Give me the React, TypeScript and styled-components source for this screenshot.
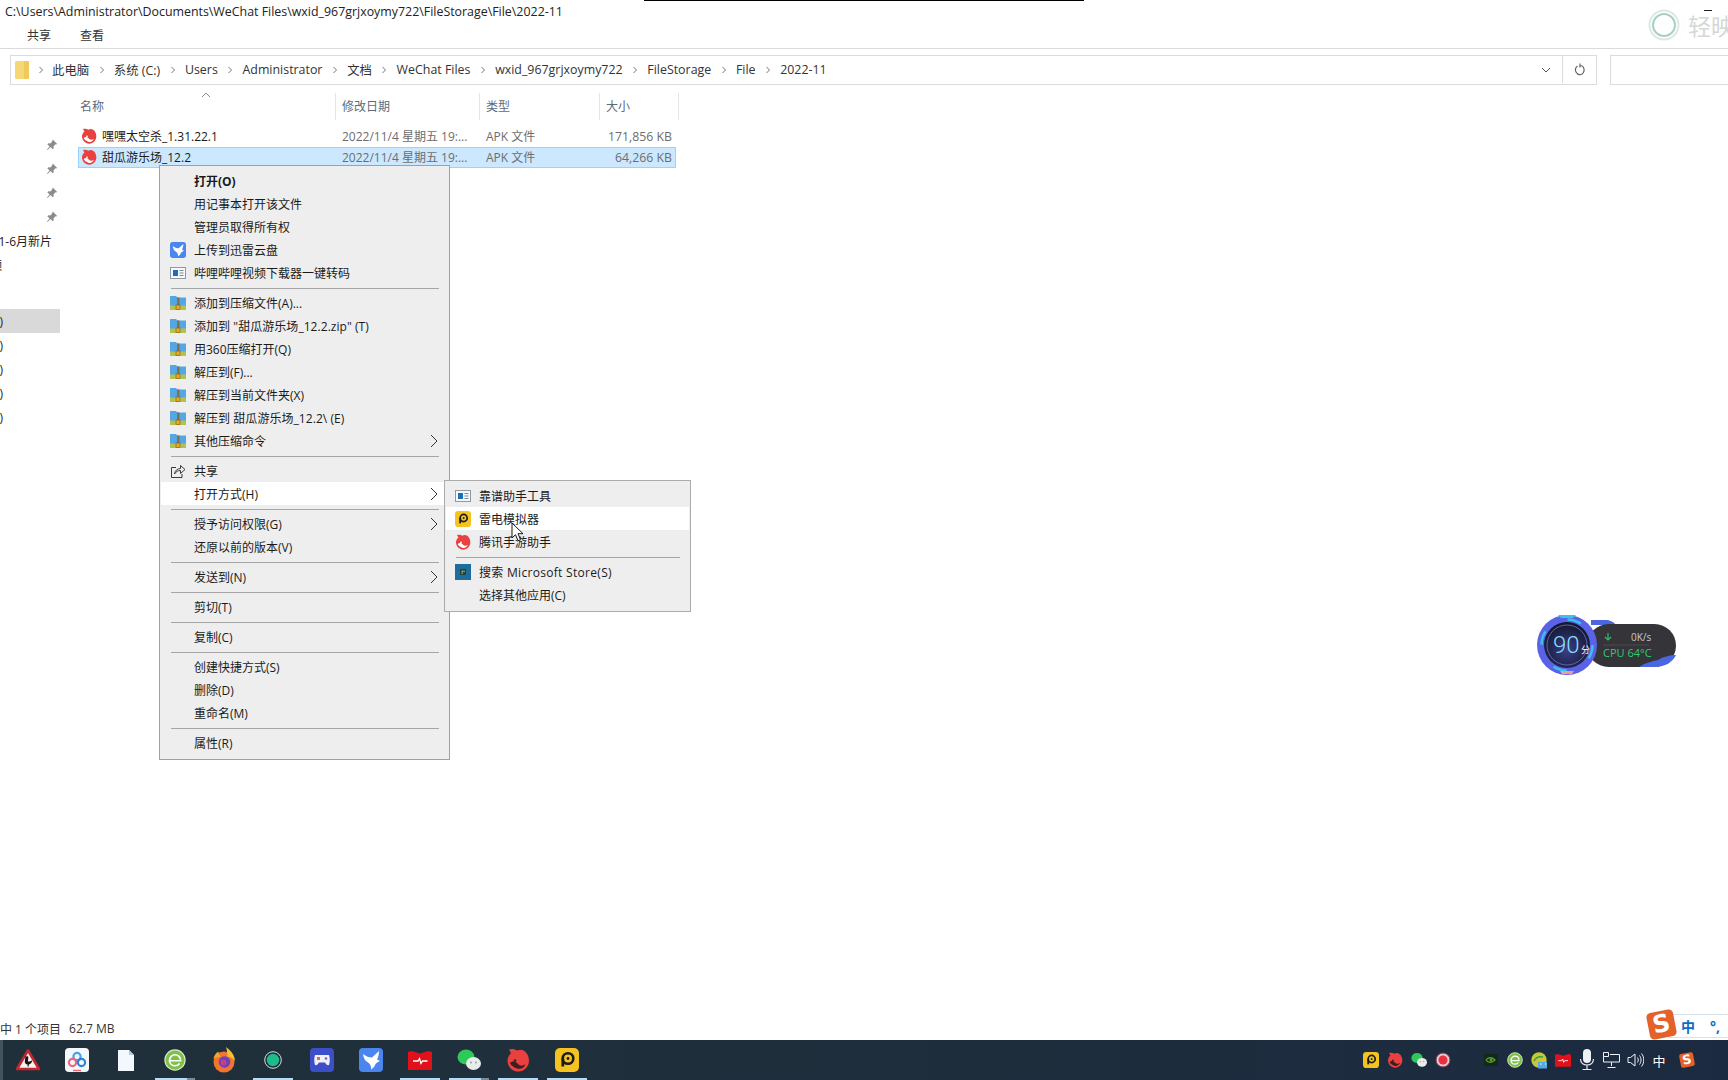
import styled, { createGlobalStyle } from "styled-components";
import type { ReactNode } from "react";

const GlobalStyle = createGlobalStyle`
  html, body {
    margin: 0;
    padding: 0;
    background: #ffffff;
  }
  body {
    font-family: "Open Sans", "Noto Sans CJK SC", sans-serif;
    font-size: 12px;
    color: #1a1a1a;
  }
`;

const Page = styled.div`
  position: relative;
  width: 1728px;
  height: 1080px;
  overflow: hidden;
  display: flex;
  flex-direction: column;
  background: #ffffff;
`;

const TitleBar = styled.div`
  height: 22px;
  padding-left: 5px;
  display: flex;
  align-items: center;
  color: #222222;
  font-size: 12.4px;
  white-space: nowrap;
`;

const Ribbon = styled.div`
  height: 26px;
  display: flex;
  align-items: center;
  gap: 29px;
  padding-left: 27px;
  border-bottom: 1px solid #dadbdc;
  color: #333333;
`;

const AddressRow = styled.div`
  height: 30px;
  margin-top: 6px;
  padding-left: 10px;
  display: flex;
  gap: 13px;
`;

const AddressBar = styled.div`
  width: 1587px;
  box-sizing: border-box;
  border: 1px solid #dcdcdc;
  display: flex;
  align-items: center;
  padding: 0 0 1px 4px;
  font-size: 12.4px;
  color: #333333;
`;

const Crumb = styled.span`
  white-space: nowrap;
`;

const CrumbGroup = styled.span`
  display: contents;
`;

const CrumbArrow = styled.span<{ $width?: number }>`
  width: ${(p) => p.$width ?? 24.7}px;
  flex: none;
  display: flex;
  justify-content: center;
`;

const AddressTools = styled.div`
  margin-left: auto;
  height: 100%;
  display: flex;
`;

const ToolCell = styled.div<{ $divider?: boolean }>`
  width: 33px;
  display: flex;
  align-items: center;
  justify-content: center;
  border-left: ${(p) => (p.$divider ? "1px solid #dcdcdc" : "none")};
`;

const SearchBox = styled.div`
  flex: 1;
  border: 1px solid #dcdcdc;
  border-right: none;
`;

const Main = styled.div`
  flex: 1;
  display: flex;
  min-height: 0;
`;

const Sidebar = styled.div`
  width: 60px;
  padding-top: 48px;
  display: flex;
  flex-direction: column;
  flex: none;
`;

const SideRow = styled.div<{ $selected?: boolean; $gap?: number; $inset: number }>`
  height: 24px;
  flex: none;
  display: flex;
  align-items: center;
  justify-content: flex-end;
  padding: 0 ${(p) => p.$inset}px 1px 0;
  box-sizing: border-box;
  margin-top: ${(p) => p.$gap ?? 0}px;
  background: ${(p) => (p.$selected ? "#d9d9d9" : "transparent")};
  white-space: nowrap;
  overflow: hidden;
  color: #222222;
`;

const FilePane = styled.div`
  padding: 8px 0 0 18px;
  flex: 1;
`;

const HeaderRow = styled.div`
  display: grid;
  grid-template-columns: 258px 144px 120px 79px;
  height: 27px;
  width: 601px;
`;

const HeaderCell = styled.div<{ $inset: number }>`
  position: relative;
  display: flex;
  align-items: center;
  padding: 0 0 2px ${(p) => p.$inset}px;
  border-right: 1px solid #e5e5e5;
  color: #5b6b7c;
`;

const SortCaret = styled.svg`
  position: absolute;
  left: 123px;
  top: -1px;
`;

const FileRows = styled.div`
  margin-top: 6px;
  width: 598px;
`;

const FileRow = styled.div<{ $selected?: boolean }>`
  display: grid;
  grid-template-columns: 258px 144px 120px 76px;
  height: 21px;
  padding-bottom: 1px;
  box-sizing: border-box;
  align-items: center;
  background: ${(p) => (p.$selected ? "#cce8ff" : "transparent")};
  outline: ${(p) => (p.$selected ? "1px solid #99d1ff" : "none")};
  outline-offset: -1px;
`;

const FileName = styled.div`
  display: flex;
  align-items: center;
  gap: 5px;
  padding-left: 3px;
  color: #1a1a1a;
`;

const FileMeta = styled.div<{ $inset?: number; $right?: boolean }>`
  padding-left: ${(p) => p.$inset ?? 0}px;
  padding-right: ${(p) => (p.$right ? 4 : 0)}px;
  text-align: ${(p) => (p.$right ? "right" : "left")};
  font-size: ${(p) => (p.$right ? 12.3 : 12)}px;
  color: #6d6d6d;
  white-space: nowrap;
`;

const StatusBar = styled.div`
  height: 23px;
  display: flex;
  align-items: center;
  gap: 8px;
  color: #333333;
  white-space: nowrap;
`;

const Taskbar = styled.div`
  height: 40px;
  display: flex;
  align-items: stretch;
  padding-left: 3.5px;
  background: linear-gradient(90deg, #20303a, #1f2e3c 50%, #1b2a40);
  box-shadow: inset 3px 0 0 #43535f;
`;

const TaskSlot = styled.div<{ $open?: boolean; $stacked?: boolean }>`
  position: relative;
  width: 49px;
  display: flex;
  align-items: center;
  justify-content: center;

  &::after {
    content: "";
    display: ${(p) => (p.$open ? "block" : "none")};
    position: absolute;
    left: 4.5px;
    right: 4.5px;
    bottom: 0;
    height: 2px;
    background: ${(p) =>
      p.$stacked
        ? "linear-gradient(90deg, #b5dcf2 80%, #7b8b97 80%)"
        : "#b5dcf2"};
  }
`;

const Tray = styled.div`
  margin-left: auto;
  padding-right: 29px;
  display: flex;
  align-items: center;
`;

const TraySlot = styled.div<{ $gap?: number }>`
  width: 24px;
  margin-left: ${(p) => p.$gap ?? 0}px;
  display: flex;
  justify-content: center;
  align-items: center;
  color: #ffffff;
  font-size: 13px;
`;

const Menu = styled.div`
  position: absolute;
  left: 159px;
  top: 165px;
  width: 291px;
  box-sizing: border-box;
  padding: 3px 0 5px;
  background: #eeeeee;
  border: 1px solid #a0a0a0;
  color: #1a1a1a;
`;

const SubMenu = styled(Menu)`
  left: 444px;
  top: 480px;
  width: 247px;
  border-color: #ababab;
`;

const Item = styled.div<{ $hover?: boolean; $inset: number }>`
  height: 23px;
  display: flex;
  align-items: center;
  gap: 8px;
  padding-left: ${(p) => p.$inset}px;
  margin: 0 1px;
  background: ${(p) => (p.$hover ? "#ffffff" : "transparent")};
`;

const ItemIcon = styled.span`
  width: 16px;
  height: 16px;
  flex: none;
  display: flex;
  align-items: center;
  justify-content: center;
`;

const ItemLabel = styled.span<{ $bold?: boolean; $track?: number }>`
  font-weight: ${(p) => (p.$bold ? 700 : 400)};
  letter-spacing: ${(p) => p.$track ?? 0}px;
  white-space: nowrap;
`;

const ItemArrow = styled.svg`
  margin-left: auto;
  margin-right: 10px;
  flex: none;
`;

const Separator = styled.div<{ $inset: number; $end: number }>`
  height: 1px;
  margin: 4px ${(p) => p.$end}px 2px ${(p) => p.$inset}px;
  background: #a6a6a6;
`;

const Cursor = styled.svg`
  position: absolute;
  left: 511px;
  top: 522px;
`;

const TopMark = styled.div`
  position: absolute;
  left: 644px;
  top: 0;
  width: 440px;
  height: 1px;
  background: #000000;
`;

const CornerDash = styled.div`
  position: absolute;
  left: 1704px;
  top: 10px;
  width: 8px;
  height: 1px;
  background: #222222;
`;

const Watermark = styled.div`
  position: absolute;
  left: 1648px;
  top: 8px;
  display: flex;
  align-items: center;
  gap: 8px;
  color: #d4d8d8;
  font-size: 23px;
  white-space: nowrap;
`;

const Widget = styled.svg`
  position: absolute;
  left: 1537px;
  top: 610px;
`;

const ImeBar = styled.div`
  position: absolute;
  left: 1668px;
  top: 1014px;
  width: 60px;
  height: 24px;
  box-sizing: border-box;
  border-top: 1px solid #d8e2ea;
  border-bottom: 1px solid #d8e2ea;
  background: #ffffff;
  display: flex;
  align-items: center;
  gap: 15px;
  padding-left: 13px;
  color: #0f6cc0;
  font-weight: 700;
  font-size: 14px;
`;

const ImeLogo = styled.div`
  position: absolute;
  left: 1648px;
  top: 1011px;
  z-index: 1;
`;

const SogouBadge = styled.div<{ $size: number }>`
  width: ${(p) => p.$size}px;
  height: ${(p) => p.$size}px;
  border-radius: ${(p) => p.$size * 0.16}px;
  background: #e4622a;
  color: #ffffff;
  transform: rotate(-11deg);
  display: flex;
  align-items: center;
  justify-content: center;
  font-family: "DejaVu Sans", sans-serif;
  font-weight: 700;
  font-size: ${(p) => p.$size * 0.9}px;
  line-height: 1;
`;

// icons

const TencentIcon = ({ size = 16, swirl = "#ffffff" }: { size?: number; swirl?: string }) => (
  <svg width={size} height={size} viewBox="0 0 24 24">
    <path d="M3 1.500C6 .5 9 1 11 2.500 17-.5 23 5 23 12.500 23 18.500 18.500 23.500 12.500 23.500 6 23.500 1.500 18.500 1.500 12.500 1.500 9.500 3 7 5 5.500 4.500 4 3.800 2.700 3 1.500z" fill="#e8413f" />
    <path d="M4 15c3-2.500 6-1.500 8 1 2 2.200 5 2.200 7.500 .2-1.500 3.500-5 5.500-8.500 4.300-3.300-1-5.800-3-7-5.500z" fill={swirl} />
    <circle cx="9" cy="12.500" r="1.300" fill={swirl} />
  </svg>
);

const LdIcon = ({ size = 16 }: { size?: number }) => (
  <svg width={size} height={size} viewBox="0 0 24 24">
    <rect width="24" height="24" rx="5" fill="#f4c320" />
    <circle cx="13" cy="10.500" r="5.300" fill="none" stroke="#1c1c1c" strokeWidth="2.600" />
    <path d="M7.800 10.500V18.500" stroke="#1c1c1c" strokeWidth="2.800" />
    <circle cx="13" cy="10.500" r="1.400" fill="#1c1c1c" />
  </svg>
);

const ThunderIcon = ({ size = 16 }: { size?: number }) => (
  <svg width={size} height={size} viewBox="0 0 24 24">
    <rect width="24" height="24" rx="4" fill="#4a86ee" />
    <path d="M4 6c3 2.500 6 3.500 9 3.500L20 3c0 4-1 6.500-2 8.500l3 1.500c-3 1-5 3-6 6l-3 2.500c.3-3-.5-5.500-3-7C6 13 4.500 10 4 6z" fill="#ffffff" />
  </svg>
);

const WindowIcon = () => (
  <svg width="16" height="14" viewBox="0 0 16 14">
    <rect x=".5" y="1.500" width="15" height="11" fill="#f6f8fa" stroke="#8d9aa6" />
    <rect x="3" y="4" width="5" height="6" fill="#1f6eb5" />
    <path d="M9.500 4.500h4M9.500 7h4M9.500 9.500h4" stroke="#7d8a96" />
  </svg>
);

const ZipIcon = () => (
  <svg width="16" height="16" viewBox="0 0 16 16">
    <path d="M0 1h6l1.500 1.500H16V11H0z" fill="#55a7e4" />
    <rect y="10.500" width="16" height="4.500" fill="#b5c04f" />
    <rect x="7" y="2.500" width="2.500" height="8" fill="#7a7358" />
    <rect x="6" y="10" width="4" height="4.500" fill="#e9a81e" stroke="#7c5c1a" strokeWidth=".6" />
  </svg>
);

const ShareIcon = () => (
  <svg width="16" height="16" viewBox="0 0 16 16" fill="none" stroke="#3a3a3a" strokeWidth="1">
    <path d="M6 4.500H1.500v10h10.500V11" />
    <path d="M4.500 11c.3-3.500 3-5.500 6-5.500V2.500L15 6.500l-4.500 4V7.500c-2.500 0-4.500 1-6 3.500z" />
  </svg>
);

const StoreIcon = () => (
  <svg width="16" height="16" viewBox="0 0 16 16">
    <rect width="16" height="16" fill="#1f6d9c" />
    <rect x="5" y="5" width="6" height="6" fill="#26404a" />
    <rect x="6.500" y="6.500" width="1.500" height="1.500" fill="#7fb04a" />
    <rect x="8.300" y="6.500" width="1.500" height="1.500" fill="#7fb04a" />
    <rect x="6.500" y="8.300" width="1.500" height="1.500" fill="#7fb04a" />
  </svg>
);

const PinIcon = () => (
  <svg width="12" height="12" viewBox="0 0 12 12">
    <path d="M7 .8l4.200 4.200-1.100.6-.6-.3-2 2 .2 2-.9.9-2.200-2.300L1.500 11 1 10.500l2.600-3.100L1.400 5.200l.9-.9 2 .2 2-2-.3-.6z" fill="#8b8b8b" />
  </svg>
);

const GooseIcon = () => (
  <svg width="26" height="24" viewBox="0 0 26 24">
    <path d="M13 2.500L24 21H2z" fill="#f7f3ee" stroke="#c4272f" strokeWidth="2.600" strokeLinejoin="round" />
    <path d="M11.500 8.500c1-.6 2 0 1.800 1.200l-.4 3.800c1.800 0 3-.4 4.300-1.300-.2 2.600-1.700 3.800-3.400 4.300v2h-1.200v-2c-1.800 0-3-1.300-2.800-2.900l.6-4.600-1-.4z" fill="#161616" />
  </svg>
);

const NetdiskIcon = () => (
  <svg width="24" height="24" viewBox="0 0 24 24">
    <rect width="24" height="24" rx="4" fill="#f5f8fb" />
    <g fill="none" strokeWidth="2.200">
      <circle cx="12" cy="8.500" r="3.600" stroke="#45a3e8" />
      <circle cx="7.500" cy="14.500" r="3.600" stroke="#e8687f" />
      <circle cx="16.500" cy="14.500" r="3.600" stroke="#2c83d8" />
    </g>
    <rect x="8" y="21.800" width="8" height="1.400" fill="#e8687f" />
  </svg>
);

const FileIcon = () => (
  <svg width="16" height="21" viewBox="0 0 16 21">
    <path d="M0 0h11l5 5v16H0z" fill="#f2f8fd" />
    <path d="M11 0v5h5z" fill="#bcc9d3" />
  </svg>
);

const BrowserIcon = ({ size = 22 }: { size?: number }) => (
  <svg width={size} height={size} viewBox="0 0 24 24">
    <circle cx="12" cy="12" r="11" fill="#7fc04a" stroke="#d9edc7" strokeWidth="1.300" />
    <path d="M5 12.800h14M6 12.800c0-4 3-6.500 6-6.500s5.800 2.300 6 5.500M6 12.800c.2 3.300 3 5.500 6 5.500 2.300 0 4-1 5-2.500" fill="none" stroke="#ffffff" strokeWidth="1.800" />
  </svg>
);

const FirefoxIcon = () => (
  <svg width="24" height="26" viewBox="0 0 24 26">
    <circle cx="12" cy="15" r="10.500" fill="#f0752f" />
    <path d="M14 0c4 3 8.500 7 9 14-2-2.500-4.500-4-7.500-4.500C15.500 6.500 15 3.500 14 0z" fill="#fbc02d" />
    <path d="M1.500 12c.5-3.500 2.500-6 5-7.500 0 2.500 1 4 2.500 5-3 .5-6 1-7.500 2.500z" fill="#f9a52c" />
    <circle cx="12.500" cy="15" r="5.800" fill="#6e3fc0" />
    <circle cx="11.500" cy="15.500" r="3" fill="#c2417f" />
  </svg>
);

const RingAppIcon = () => (
  <svg width="18" height="18" viewBox="0 0 18 18">
    <circle cx="9" cy="9" r="8.300" fill="none" stroke="#cde3dc" strokeWidth="1" />
    <circle cx="9" cy="9" r="6.200" fill="#1ebc8b" />
  </svg>
);

const WatermarkRing = () => (
  <svg width="32" height="32" viewBox="0 0 32 32" fill="none">
    <circle cx="16" cy="16" r="14.500" stroke="#dde8e4" strokeWidth="2" />
    <circle cx="16" cy="16" r="11" stroke="#a9d0c5" strokeWidth="2" />
  </svg>
);

const GameIcon = () => (
  <svg width="24" height="24" viewBox="0 0 24 24">
    <rect width="24" height="24" rx="4" fill="#3d4ec9" />
    <path d="M5 7h14c1 3 1 7 0 10-1.500.5-3-.5-4-2.500H9c-1 2-2.500 3-4 2.500-1-3-1-7 0-10z" fill="#f1eef6" />
    <rect x="7" y="9" width="3" height="3" fill="#e2694f" />
    <circle cx="16" cy="10.500" r="1.300" fill="#5a6ad8" />
  </svg>
);

const PulseIcon = ({ width = 24, height = 20 }: { width?: number; height?: number }) => (
  <svg width={width} height={height} viewBox="0 0 24 20">
    <path d="M0 2l4-1 8 2.500L20 1l4 1v18H0z" fill="#e2101a" />
    <path d="M5 11h5l1.500-2.500 1.500 5 1.500-2.500h5" fill="none" stroke="#ffffff" strokeWidth="1.300" />
  </svg>
);

const WeChatIcon = ({ size = 24 }: { size?: number }) => (
  <svg width={size} height={size} viewBox="0 0 24 24">
    <ellipse cx="9" cy="9" rx="8.500" ry="7.500" fill="#2fc95a" />
    <ellipse cx="16.500" cy="15.500" rx="7.500" ry="6.500" fill="#e8ecea" />
    <circle cx="14" cy="14.500" r="1" fill="#9aa3a0" />
    <circle cx="19" cy="14.500" r="1" fill="#9aa3a0" />
  </svg>
);

const RecordIcon = () => (
  <svg width="16" height="16" viewBox="0 0 16 16">
    <circle cx="8" cy="8" r="7" fill="#e4c8cf" stroke="#7a3a4a" />
    <circle cx="8" cy="8" r="4.500" fill="#ea2f3f" />
  </svg>
);

const NvidiaIcon = () => (
  <svg width="16" height="14" viewBox="0 0 16 14">
    <rect x="1" y="1" width="14" height="12" fill="#0f2a1a" />
    <path d="M3 7c2-3 6-3 9 0-3 3-7 3-9 0z" fill="none" stroke="#5f9a2a" strokeWidth="1.300" />
    <circle cx="8" cy="7" r="1.400" fill="#5f9a2a" />
  </svg>
);

const LeafGameIcon = () => (
  <svg width="17" height="17" viewBox="0 0 17 17">
    <circle cx="8" cy="8" r="7.700" fill="#c6c934" />
    <path d="M3 9c2-4 5-5 9-4" fill="none" stroke="#3d9a4e" strokeWidth="1.500" />
    <path d="M7 10h9v6.500H7z" fill="#57a9e6" />
    <path d="M9 12h1.500M14 12h1" stroke="#ffffff" strokeWidth="1.200" />
  </svg>
);

const MicIcon = () => (
  <svg width="16" height="22" viewBox="0 0 16 22">
    <rect x="4" y="0" width="8" height="14" rx="4" fill="#eef1f5" />
    <path d="M1.500 10c0 4 3 6 6.500 6s6.500-2 6.500-6M8 16v4M3.500 20.500h9" fill="none" stroke="#e8ecf0" strokeWidth="1.200" />
  </svg>
);

const NetworkIcon = () => (
  <svg width="17" height="17" viewBox="0 0 17 17" fill="none" stroke="#eef1f5">
    <path d="M.5.500h5v4h-5zM.5 4.500V10h16V2.500H7M8.500 10v4M4.500 15.500h8" />
  </svg>
);

const SpeakerIcon = () => (
  <svg width="17" height="16" viewBox="0 0 17 16" fill="none" stroke="#eef1f5">
    <path d="M1 5.500h2.500L8 2v12l-4.500-3.500H1zM10.500 5.500c1 1.500 1 3.500 0 5M12.500 3.500c2 2.500 2 6.500 0 9M14.500 1.500c3 3.500 3 9.500 0 13" />
  </svg>
);

const FolderIcon = () => (
  <svg width="14" height="18" viewBox="0 0 14 18">
    <path d="M1 0h12l1 1v16l-1 1H1l-1-1V1z" fill="#f7d774" />
    <rect x="9" y="0" width="5" height="18" fill="#e8bf4d" opacity=".6" />
  </svg>
);

const Chevron = () => (
  <svg width="6" height="8" viewBox="0 0 6 8" fill="none" stroke="#777777">
    <path d="M1.500 1l3 3-3 3" />
  </svg>
);

const SubArrow = () => (
  <ItemArrow width="8" height="14" viewBox="0 0 8 14" fill="none" stroke="#333333">
    <path d="M1 1l6 6-6 6" />
  </ItemArrow>
);

type MenuEntry = {
  label: string;
  icon?: ReactNode;
  bold?: boolean;
  arrow?: boolean;
  hover?: boolean;
  track?: number;
};

const zip = <ZipIcon />;

const mainMenu: MenuEntry[][] = [
  [
    { label: "打开(O)", bold: true },
    { label: "用记事本打开该文件" },
    { label: "管理员取得所有权" },
    { label: "上传到迅雷云盘", icon: <ThunderIcon /> },
    { label: "哔哩哔哩视频下载器一键转码", icon: <WindowIcon /> },
  ],
  [
    { label: "添加到压缩文件(A)...", icon: zip },
    { label: "添加到 \"甜瓜游乐场_12.2.zip\" (T)", icon: zip, track: 0.05 },
    { label: "用360压缩打开(Q)", icon: zip },
    { label: "解压到(F)...", icon: zip },
    { label: "解压到当前文件夹(X)", icon: zip },
    { label: "解压到 甜瓜游乐场_12.2\\ (E)", icon: zip, track: 0.05 },
    { label: "其他压缩命令", icon: zip, arrow: true },
  ],
  [
    { label: "共享", icon: <ShareIcon /> },
    { label: "打开方式(H)", arrow: true, hover: true },
  ],
  [
    { label: "授予访问权限(G)", arrow: true },
    { label: "还原以前的版本(V)" },
  ],
  [{ label: "发送到(N)", arrow: true }],
  [{ label: "剪切(T)" }],
  [{ label: "复制(C)" }],
  [
    { label: "创建快捷方式(S)" },
    { label: "删除(D)" },
    { label: "重命名(M)" },
  ],
  [{ label: "属性(R)" }],
];

const openWithMenu: MenuEntry[][] = [
  [
    { label: "靠谱助手工具", icon: <WindowIcon /> },
    { label: "雷电模拟器", icon: <LdIcon />, hover: true },
    { label: "腾讯手游助手", icon: <TencentIcon /> },
  ],
  [
    { label: "搜索 Microsoft Store(S)", icon: <StoreIcon />, track: 0.3 },
    { label: "选择其他应用(C)" },
  ],
];

const crumbs = [
  "此电脑",
  "系统 (C:)",
  "Users",
  "Administrator",
  "文档",
  "WeChat Files",
  "wxid_967grjxoymy722",
  "FileStorage",
  "File",
  "2022-11",
];

const columns = [
  { label: "名称", inset: 2 },
  { label: "修改日期", inset: 6 },
  { label: "类型", inset: 6 },
  { label: "大小", inset: 6 },
];

const files = [
  { name: "嘿嘿太空杀_1.31.22.1", size: "171,856 KB" },
  { name: "甜瓜游乐场_12.2", size: "64,266 KB", selected: true },
];

const drives = ["软件 (D:)", "文档 (E:)", "娱乐 (F:)", "本地 (G:)"];

const taskItems: { icon: ReactNode; open?: boolean; stacked?: boolean }[] = [
  { icon: <GooseIcon /> },
  { icon: <NetdiskIcon /> },
  { icon: <FileIcon /> },
  { icon: <BrowserIcon />, open: true, stacked: true },
  { icon: <FirefoxIcon /> },
  { icon: <RingAppIcon />, open: true },
  { icon: <GameIcon /> },
  { icon: <ThunderIcon size={24} /> },
  { icon: <PulseIcon />, open: true },
  { icon: <WeChatIcon />, open: true, stacked: true },
  { icon: <TencentIcon size={24} swirl="#3b1d22" />, open: true },
  { icon: <LdIcon size={24} />, open: true },
];

const MenuList = ({
  groups,
  inset,
  end,
}: {
  groups: MenuEntry[][];
  inset: number;
  end: number;
}) => (
  <>
    {groups.map((group, i) => (
      <div key={i}>
        {i > 0 && <Separator $inset={inset} $end={end} />}
        {group.map((item) => (
          <Item key={item.label} $hover={item.hover} $inset={inset - 2}>
            <ItemIcon>{item.icon}</ItemIcon>
            <ItemLabel $bold={item.bold} $track={item.track}>
              {item.label}
            </ItemLabel>
            {item.arrow && <SubArrow />}
          </Item>
        ))}
      </div>
    ))}
  </>
);

const ScoreWidget = () => (
  <Widget width="144" height="70" viewBox="0 0 144 70">
    <defs>
      <radialGradient id="scoreFace" cx="50%" cy="60%" r="60%">
        <stop offset="0%" stopColor="#3a3f86" />
        <stop offset="100%" stopColor="#12162c" />
      </radialGradient>
    </defs>
    <path d="M54 10h14c5 0 9 2 11 5H54z" fill="#4a66e0" />
    <rect x="50" y="14" width="89" height="43" rx="21.500" fill="#353539" />
    <path d="M102 57h16c10 0 18-5 21-12-5 0-14 2-18 5-6 1-13 3-19 7z" fill="#4a66e0" />
    <path d="M66 35h46" stroke="#4a4a50" />
    <circle cx="30" cy="35" r="30" fill="#5a63e6" />
    <circle cx="30" cy="35" r="25.500" fill="none" stroke="#3cc0ea" strokeWidth="2.500" strokeDasharray="14 26" />
    <circle cx="30" cy="35" r="23" fill="url(#scoreFace)" />
    <circle cx="30" cy="35" r="20" fill="none" stroke="#6e74c8" strokeWidth=".8" />
    <path d="M23 61h14l-2 3H25z" fill="#e8a09a" />
    <path d="M21 5h18l-3 3H24z" fill="#3cc0ea" />
    <text x="16" y="43" fontFamily="Roboto, sans-serif" fontWeight="300" fontSize="24" fill="#8adcff">90</text>
    <text x="44" y="43" fontFamily="Noto Sans CJK SC, sans-serif" fontSize="9" fill="#ffffff">分</text>
    <path d="M71 23v7M68 27l3 3 3-3" fill="none" stroke="#2fbf6a" strokeWidth="1.200" />
    <text x="94" y="31" fontFamily="Open Sans, sans-serif" fontSize="10" fill="#c9c9c9">0K/s</text>
    <text x="66" y="47" fontFamily="Open Sans, sans-serif" fontSize="11" fill="#2ecb6e">CPU 64°C</text>
  </Widget>
);

export default function App() {
  return (
    <Page>
      <GlobalStyle />
      <TitleBar>C:\Users\Administrator\Documents\WeChat Files\wxid_967grjxoymy722\FileStorage\File\2022-11</TitleBar>
      <Ribbon>
        <span>共享</span>
        <span>查看</span>
      </Ribbon>
      <AddressRow>
        <AddressBar>
          <FolderIcon />
          <CrumbArrow $width={23}>
            <Chevron />
          </CrumbArrow>
          {crumbs.map((c, i) => (
            <CrumbGroup key={c}>
              <Crumb>{c}</Crumb>
              {i < crumbs.length - 1 && (
                <CrumbArrow>
                  <Chevron />
                </CrumbArrow>
              )}
            </CrumbGroup>
          ))}
          <AddressTools>
            <ToolCell>
              <svg width="10" height="6" viewBox="0 0 10 6" fill="none" stroke="#555555">
                <path d="M1 1l4 4 4-4" />
              </svg>
            </ToolCell>
            <ToolCell $divider>
              <svg width="12" height="13" viewBox="0 0 12 13" fill="none" stroke="#666666" strokeWidth="1.200">
                <path d="M3.500 3C1.500 4.500 1 7 2 9s3 3 5 2.500 3.500-3 3-5.500-2.500-3.500-4-3.500M6 .5v4" />
              </svg>
            </ToolCell>
          </AddressTools>
        </AddressBar>
        <SearchBox />
      </AddressRow>
      <Main>
        <Sidebar>
          {[0, 1, 2, 3].map((n) => (
            <SideRow key={n} $inset={2}>
              <PinIcon />
            </SideRow>
          ))}
          <SideRow $inset={8}>2021-6月新片</SideRow>
          <SideRow $inset={58}>视频</SideRow>
          <SideRow $selected $gap={32} $inset={57}>系统 (C:)</SideRow>
          {drives.map((d) => (
            <SideRow key={d} $inset={57}>{d}</SideRow>
          ))}
        </Sidebar>
        <FilePane>
          <HeaderRow>
            {columns.map((col, i) => (
              <HeaderCell key={col.label} $inset={col.inset}>
                {i === 0 && (
                  <SortCaret width="10" height="6" viewBox="0 0 10 6" fill="none" stroke="#8a8a8a">
                    <path d="M1 5l4-4 4 4" />
                  </SortCaret>
                )}
                {col.label}
              </HeaderCell>
            ))}
          </HeaderRow>
          <FileRows>
            {files.map((f) => (
              <FileRow key={f.name} $selected={f.selected}>
                <FileName>
                  <TencentIcon />
                  {f.name}
                </FileName>
                <FileMeta $inset={6}>2022/11/4 星期五 19:...</FileMeta>
                <FileMeta $inset={6}>APK 文件</FileMeta>
                <FileMeta $right>{f.size}</FileMeta>
              </FileRow>
            ))}
          </FileRows>
        </FilePane>
      </Main>
      <StatusBar>
        <span>中 1 个项目</span>
        <span>62.7 MB</span>
      </StatusBar>
      <Taskbar>
        {taskItems.map((t, i) => (
          <TaskSlot key={i} $open={t.open} $stacked={t.stacked}>
            {t.icon}
          </TaskSlot>
        ))}
        <Tray>
          <TraySlot><LdIcon size={16} /></TraySlot>
          <TraySlot><TencentIcon size={16} swirl="#3b1d22" /></TraySlot>
          <TraySlot><WeChatIcon size={16} /></TraySlot>
          <TraySlot><RecordIcon /></TraySlot>
          <TraySlot $gap={24}><NvidiaIcon /></TraySlot>
          <TraySlot><BrowserIcon size={16} /></TraySlot>
          <TraySlot><LeafGameIcon /></TraySlot>
          <TraySlot><PulseIcon width={16} height={14} /></TraySlot>
          <TraySlot><MicIcon /></TraySlot>
          <TraySlot><NetworkIcon /></TraySlot>
          <TraySlot><SpeakerIcon /></TraySlot>
          <TraySlot>中</TraySlot>
          <TraySlot $gap={4}><SogouBadge $size={14}>S</SogouBadge></TraySlot>
        </Tray>
      </Taskbar>

      <TopMark />
      <CornerDash />
      <Watermark>
        <WatermarkRing />
        轻映
      </Watermark>

      <Menu>
        <MenuList groups={mainMenu} inset={11} end={10} />
      </Menu>
      <SubMenu>
        <MenuList groups={openWithMenu} inset={11} end={10} />
      </SubMenu>
      <Cursor width="13" height="20" viewBox="0 0 13 20">
        <path d="M1 1v15l3.500-3.300 2.500 6 2.500-1-2.500-6h5z" fill="#ffffff" stroke="#1a1a1a" strokeWidth="1" />
      </Cursor>

      <ScoreWidget />

      <ImeBar>
        <span>中</span>
        <span>°,</span>
      </ImeBar>
      <ImeLogo>
        <SogouBadge $size={27}>S</SogouBadge>
      </ImeLogo>
    </Page>
  );
}
